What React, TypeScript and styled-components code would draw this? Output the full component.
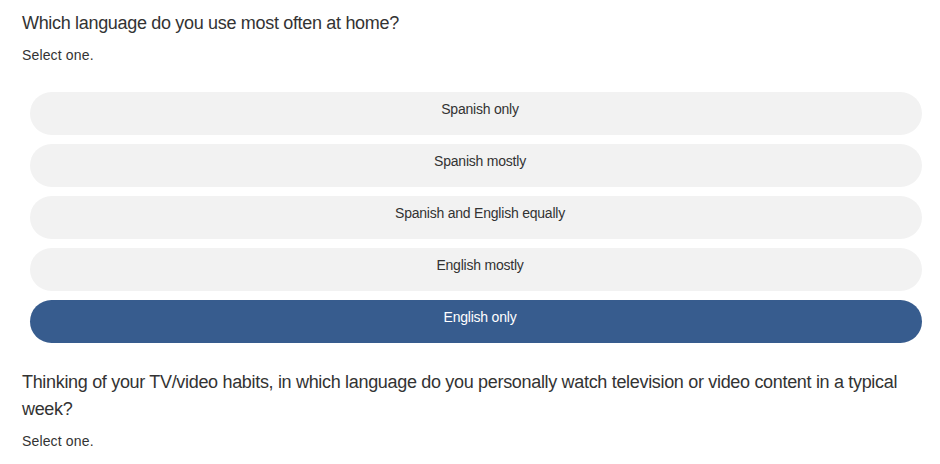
import React, { useState } from "react";
import styled, { createGlobalStyle } from "styled-components";

const GlobalStyle = createGlobalStyle`
  html, body {
    margin: 0;
    padding: 0;
    background: #ffffff;
  }
  body {
    font-family: "Liberation Sans", Arial, Helvetica, sans-serif;
    color: #333333;
  }
`;

const Page = styled.main`
  padding: 10px 18px 0 22px;
`;

const Question = styled.section`
  display: flex;
  flex-direction: column;
`;

const Prompt = styled.h2`
  margin: 0;
  font-size: 18px;
  font-weight: 400;
  line-height: 27px;
  letter-spacing: -0.32px;
  color: #333333;
`;

const Hint = styled.p`
  margin: 8px 0 0;
  font-size: 14px;
  line-height: 20px;
  letter-spacing: 0.15px;
  color: #333333;
`;

const Choices = styled.div`
  display: flex;
  flex-direction: column;
  gap: 9px;
  margin: 27px 0 26px 8px;
`;

const Choice = styled.button<{ $selected: boolean }>`
  display: block;
  width: 100%;
  height: 43px;
  box-sizing: border-box;
  padding: 7px 8px 16px 16px;
  border: none;
  border-radius: 22px;
  font-family: inherit;
  font-size: 14px;
  line-height: 20px;
  letter-spacing: -0.22px;
  text-align: center;
  cursor: pointer;
  background: ${(p) => (p.$selected ? "#375c8e" : "#f2f2f2")};
  color: ${(p) => (p.$selected ? "#ffffff" : "#333333")};
`;

const options = [
  "Spanish only",
  "Spanish mostly",
  "Spanish and English equally",
  "English mostly",
  "English only",
];

export default function App() {
  const [selected, setSelected] = useState("English only");
  return (
    <>
      <GlobalStyle />
      <Page>
        <Question>
          <Prompt>Which language do you use most often at home?</Prompt>
          <Hint>Select one.</Hint>
          <Choices>
            {options.map((o) => (
              <Choice key={o} $selected={o === selected} onClick={() => setSelected(o)}>
                {o}
              </Choice>
            ))}
          </Choices>
        </Question>
        <Question>
          <Prompt>
            Thinking of your TV/video habits, in which language do you personally watch television or video content in a typical week?
          </Prompt>
          <Hint>Select one.</Hint>
        </Question>
      </Page>
    </>
  );
}
